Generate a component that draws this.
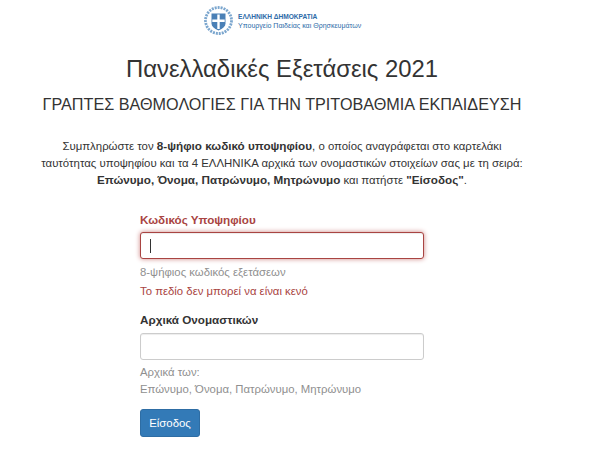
<style>
:global(body){margin:0;background:#fff;font-family:"Liberation Sans",Arial,sans-serif;color:#333;}
.page{width:564px;height:456px;overflow:hidden;display:flex;flex-direction:column;align-items:center;}
.logo{display:flex;align-items:center;gap:5px;margin-top:6px;height:29px;width:156px;}
.logo svg{width:29px;height:29px;flex:none;}
.brand{display:flex;flex-direction:column;color:#2d6aa8;line-height:9px;white-space:nowrap;}
.brand b{font-size:6.6px;}
.brand span{font-size:7.05px;}
h1{font-weight:400;font-size:23.85px;line-height:30px;margin:19px 0 0;color:#333;}
h2{font-weight:400;font-size:16.2px;line-height:20px;margin:10px 0 0;color:#333;}
.intro{margin:24px 0 0;width:560px;text-align:center;font-size:11.4px;line-height:17px;}
.intro b{font-size:11.7px;line-height:1;}
form{width:284px;margin-top:22px;font-size:11.35px;display:flex;flex-direction:column;}
label{display:block;font-weight:700;font-size:11.7px;line-height:17px;color:#333;}
.err label{color:#a94442;}
.inp{height:27px;margin-top:4px;box-sizing:border-box;border:1px solid #ccc;border-radius:3px;background:#fff;box-shadow:inset 0 1px 1px rgba(0,0,0,.075);display:flex;align-items:center;padding-left:9px;}
.err .inp{border-color:#a94442;box-shadow:inset 0 1px 1px rgba(0,0,0,.075),0 0 5px #ce8483;}
.f2 .inp{margin-top:5px;}
.caret{width:1px;height:14px;background:#333;}
.help{color:#8f8f8f;line-height:17px;margin-top:5px;}
.f2 + .help{margin-top:4px;}
.msg{color:#a94442;line-height:17px;margin-top:2px;}
.f2{margin-top:11px;}
.btn{align-self:flex-start;margin-top:11px;width:60px;height:28px;background:#337ab7;border:1px solid #2e6da4;border-radius:3px;color:#fff;font:11.4px "Liberation Sans",Arial,sans-serif;padding:0;}
</style>

<div class="page">
  <div class="logo">
    <svg viewBox="0 0 29 29" aria-hidden="true">
      <circle cx="14.5" cy="14.5" r="13" fill="none" stroke="#7ba6ce" stroke-width="2.8" stroke-dasharray="2 1"/>
      <path d="M7.5 7.5h14v10q0 4-7 7q-7-3-7-7z" fill="#4a80b6"/>
      <path d="M13.3 8.5h2.4v5h5v2.4h-5v7h-2.4v-7h-5v-2.4h5z" fill="#fff"/>
    </svg>
    <div class="brand"><b>ΕΛΛΗΝΙΚΗ ΔΗΜΟΚΡΑΤΙΑ</b><span>Υπουργείο Παιδείας και Θρησκευμάτων</span></div>
  </div>
  <h1>Πανελλαδικές Εξετάσεις 2021</h1>
  <h2>ΓΡΑΠΤΕΣ ΒΑΘΜΟΛΟΓΙΕΣ ΓΙΑ ΤΗΝ ΤΡΙΤΟΒΑΘΜΙΑ ΕΚΠΑΙΔΕΥΣΗ</h2>
  <p class="intro">Συμπληρώστε τον <b>8-ψήφιο κωδικό υποψηφίου</b>, ο οποίος αναγράφεται στο καρτελάκι<br>ταυτότητας υποψηφίου και τα 4 ΕΛΛΗΝΙΚΑ αρχικά των ονομαστικών στοιχείων σας με τη σειρά:<br><b>Επώνυμο, Όνομα, Πατρώνυμο, Μητρώνυμο</b> και πατήστε <b>"Είσοδος"</b>.</p>
  <form>
    <div class="err">
      <label for="a">Κωδικός Υποψηφίου</label>
      <div class="inp" id="a"><span class="caret"></span></div>
    </div>
    <div class="help">8-ψήφιος κωδικός εξετάσεων</div>
    <div class="msg">Το πεδίο δεν μπορεί να είναι κενό</div>
    <div class="f2">
      <label for="b">Αρχικά Ονομαστικών</label>
      <div class="inp" id="b"></div>
    </div>
    <div class="help">Αρχικά των:<br>Επώνυμο, Όνομα, Πατρώνυμο, Μητρώνυμο</div>
    <button class="btn" type="button">Είσοδος</button>
  </form>
</div>
